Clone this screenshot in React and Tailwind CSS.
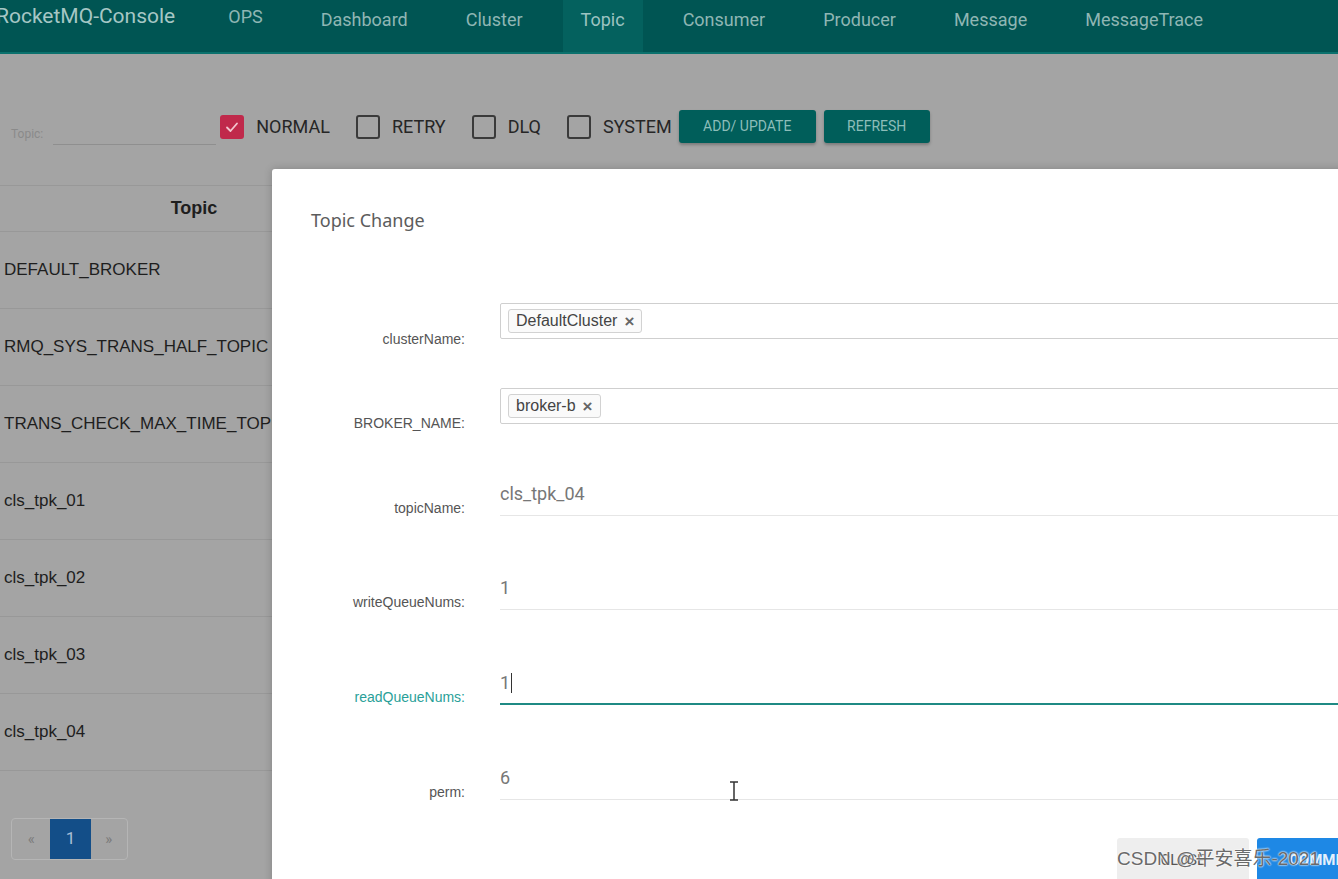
import React from 'react';

const NAV = ['OPS', 'Dashboard', 'Cluster', 'Topic', 'Consumer', 'Producer', 'Message', 'MessageTrace'];
const ROWS = ['DEFAULT_BROKER', 'RMQ_SYS_TRANS_HALF_TOPIC', 'TRANS_CHECK_MAX_TIME_TOPIC', 'cls_tpk_01', 'cls_tpk_02', 'cls_tpk_03', 'cls_tpk_04'];
const FILTERS = [
  { label: 'NORMAL', checked: true },
  { label: 'RETRY' },
  { label: 'DLQ' },
  { label: 'SYSTEM' },
];

function Checkbox({ checked }) {
  if (checked) {
    return (
      <span className="w-[24px] h-[24px] rounded-[3px] bg-[#c0294b] flex items-center justify-center">
        <svg width="16" height="16" viewBox="0 0 16 16" fill="none" stroke="#f3c6cf" strokeWidth="1.8" strokeLinecap="round" strokeLinejoin="round">
          <path d="M3 8.5 L6.5 12 L13 4.5" />
        </svg>
      </span>
    );
  }
  return <span className="w-[24px] h-[24px] rounded-[3px] border-2 border-[#3a3a3a]" />;
}

function Chip({ children }) {
  return (
    <span className="inline-flex items-center gap-[7px] h-[24px] px-[7px] border border-[#d2d2d2] rounded-[3px] bg-[#fafafa] text-[16px] text-[#444]">
      {children}
      <span className="text-[17px] font-bold text-[#666] leading-none">×</span>
    </span>
  );
}

function SelectRow({ label, children, labelPad, height }) {
  return (
    <div className={`flex ${height}`}>
      <div className={`w-[193px] text-right text-[14px] leading-[16px] text-[#555] ${labelPad}`}>{label}</div>
      <div className="ml-[35px] flex-1 h-[36px] border border-[#cfcfcf] rounded-[2px] flex items-center px-[7px]">{children}</div>
    </div>
  );
}

function InputRow({ label, value, height, active, caret }) {
  return (
    <div className={`flex ${height}`}>
      <div className={`w-[193px] text-right text-[14px] leading-[16px] pt-[22px] ${active ? 'text-[#2a9f99]' : 'text-[#555]'}`}>{label}</div>
      <div className={`ml-[35px] flex-1 h-[38px] flex items-start pt-[5px] ${active ? 'border-b-2 border-[#1f8a84]' : 'border-b border-[#e6e6e6]'}`}>
        <span className="text-[18px] text-[#777] leading-[22px] font-['Roboto',sans-serif]">{value}</span>
        {caret && <span className="w-[1px] h-[20px] bg-[#333] ml-[1px] mt-[1px]" />}
      </div>
    </div>
  );
}

export default function App() {
  return (
    <div className="relative w-[1338px] h-[879px] overflow-hidden bg-[#a4a4a4] font-['Roboto','Liberation_Sans',sans-serif]">
      {/* Navbar */}
      <div className="h-[54px] bg-[#005553] border-b-2 border-[#0b716d] flex items-start">
        <div className="ml-[-4px] pt-[1px] h-[52px] text-[21px] text-[#a6c7c5] whitespace-nowrap">RocketMQ-Console</div>
        <div className="ml-[35px] flex gap-[22px]">
          {NAV.map(n => (
            <div
              key={n}
              className={`px-[18px] h-[52px] text-[18px] ${n === 'Topic' ? 'bg-[#04615e] text-[#9cc3c1]' : 'text-[#8fb6b4]'} ${n === 'OPS' ? 'pt-[3px]' : 'pt-[6px]'}`}
            >{n}</div>
          ))}
        </div>
      </div>

      {/* Toolbar */}
      <div className="flex items-center mt-[56px] h-[33px]">
        <div className="ml-[11px] flex items-end h-[36px]">
          <span className="text-[12px] text-[#8a8a8a] pb-[2px]">Topic:</span>
          <span className="ml-[10px] w-[163px] border-b border-[#8f8f8f]" />
        </div>
        <div className="ml-[4px] flex items-center">
          {FILTERS.map((f, i) => (
            <div key={f.label} className={`flex items-center gap-[12px] ${i ? 'ml-[26px]' : ''}`}>
              <Checkbox checked={f.checked} />
              <span className="text-[18px] text-[#262626]">{f.label}</span>
            </div>
          ))}
        </div>
        <button className="ml-[7px] w-[137px] h-[33px] rounded-[3px] bg-[#005e5a] text-[#8cbdb9] text-[14px] shadow-[0_2px_3px_rgba(0,0,0,0.25)]">ADD/ UPDATE</button>
        <button className="ml-[8px] w-[106px] h-[33px] rounded-[3px] bg-[#005e5a] text-[#8cbdb9] text-[14px] shadow-[0_2px_3px_rgba(0,0,0,0.25)]">REFRESH</button>
      </div>

      {/* Table */}
      <div className="mt-[42px] w-[420px] border-t border-[#989898] font-['Liberation_Sans',sans-serif]">
        <div className="h-[46px] border-b border-[#989898] w-[388px] flex items-center justify-center font-bold text-[18px] text-[#1e1e1e]">Topic</div>
        {ROWS.map(r => (
          <div key={r} className="h-[77px] border-b border-[#989898] flex items-center pl-[4px] text-[17px] text-[#1e1e1e] whitespace-nowrap">{r}</div>
        ))}
      </div>

      {/* Pagination */}
      <div className="mt-[47px] ml-[11px] flex h-[42px] w-[117px] border border-[#b5b5b5] rounded-[4px] overflow-hidden text-[#7b7b7b]">
        <div className="w-[39px] flex items-center justify-center text-[15px]">«</div>
        <div className="w-[41px] flex items-center justify-center bg-[#134e88] text-[#a9bfd6] text-[17px]">1</div>
        <div className="w-[37px] flex items-center justify-center text-[15px]">»</div>
      </div>

      {/* Modal */}
      <div className="absolute left-[272px] top-[169px] w-[1130px] h-[760px] bg-white rounded-tl-[3px] shadow-[0_0_8px_rgba(0,0,0,0.2)]">
        <div className="pl-[39px] pt-[39px] text-[18px] text-[#5c5c5c] font-['Noto_Sans','Liberation_Sans',sans-serif] leading-[24px]">Topic Change</div>
        <div className="mt-[71px] pr-[40px] font-['Liberation_Sans','Noto_Sans',sans-serif]">
          <SelectRow label="clusterName:" labelPad="pt-[28px]" height="h-[85px]">
            <Chip>DefaultCluster</Chip>
          </SelectRow>
          <SelectRow label="BROKER_NAME:" labelPad="pt-[27px]" height="h-[90px]">
            <Chip>broker-b</Chip>
          </SelectRow>
          <InputRow label="topicName:" value="cls_tpk_04" height="h-[94px]" />
          <InputRow label="writeQueueNums:" value="1" height="h-[95px]" />
          <InputRow label="readQueueNums:" value="1" height="h-[95px]" active caret />
          <InputRow label="perm:" value="6" height="h-[76px]" />
        </div>
        <div className="flex justify-end pr-[35px] gap-[8px]">
          <button className="w-[132px] h-[44px] rounded-[3px] bg-[#eeeeee] text-[15px] text-[#555]">CLOSE</button>
          <button className="w-[110px] h-[44px] rounded-[3px] bg-[#1e88e5] text-[15px] font-bold text-[#e3f0fc] text-left pl-[32px]">COMMIT</button>
        </div>
        {/* text cursor */}
        <svg className="absolute left-[457px] top-[612px]" width="10" height="20" viewBox="0 0 10 20" fill="none" stroke="#333" strokeWidth="1.5">
          <path d="M1 1h8M5 1v18M1 19h8" />
        </svg>
      </div>

      {/* watermark */}
      <div className="absolute left-[1117px] top-[845px] text-[19px] text-[#6a6a6a] font-['Liberation_Sans','Noto_Sans_CJK_SC',sans-serif] [text-shadow:0_0_2px_#fff,0_0_2px_#fff] whitespace-nowrap">CSDN @平安喜乐-2021</div>
    </div>
  );
}
